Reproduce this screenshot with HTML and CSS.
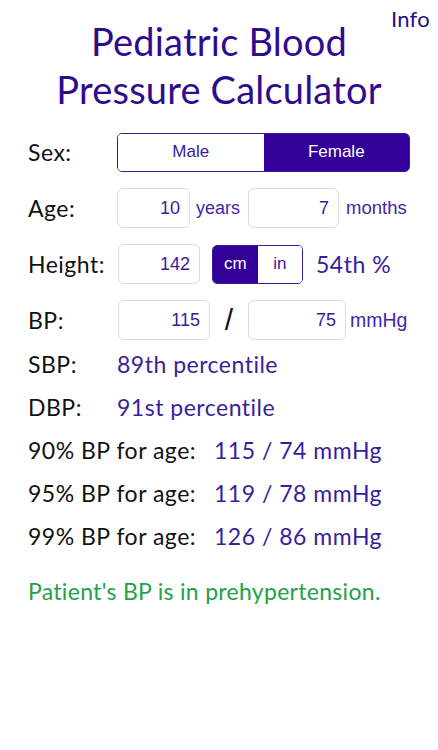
FILE: index.html
```html
<!DOCTYPE html>
<html>
<head>
<meta charset="utf-8">
<link rel="stylesheet" href="styles.css">
</head>
<body>
<div class="screen">
  <a class="info">Info</a>
  <h1 class="title">Pediatric Blood<br>Pressure Calculator</h1>

  <div class="row">
    <div class="label">Sex:</div>
    <div class="seg seg-sex">
      <div class="seg-item">Male</div>
      <div class="seg-item on">Female</div>
    </div>
  </div>

  <div class="row">
    <div class="label">Age:</div>
    <div class="box box-years">10</div>
    <div class="unit unit-years">years</div>
    <div class="box box-months">7</div>
    <div class="unit unit-months">months</div>
  </div>

  <div class="row">
    <div class="label">Height:</div>
    <div class="box box-height">142</div>
    <div class="seg seg-unit">
      <div class="seg-item on">cm</div>
      <div class="seg-item">in</div>
    </div>
    <div class="pct">54th %</div>
  </div>

  <div class="row">
    <div class="label">BP:</div>
    <div class="box box-sbp">115</div>
    <div class="slash">/</div>
    <div class="box box-dbp">75</div>
    <div class="unit unit-mmhg">mmHg</div>
  </div>

  <div class="results">
    <div class="res"><span class="res-label">SBP:</span><span class="val">89th percentile</span></div>
    <div class="res"><span class="res-label">DBP:</span><span class="val">91st percentile</span></div>
    <div class="res"><span class="res-label wide">90% BP for age:</span><span class="val">115 / 74 mmHg</span></div>
    <div class="res"><span class="res-label wide">95% BP for age:</span><span class="val">119 / 78 mmHg</span></div>
    <div class="res"><span class="res-label wide">99% BP for age:</span><span class="val">126 / 86 mmHg</span></div>
  </div>

  <div class="status">Patient's BP is in prehypertension.</div>
</div>
</body>
</html>
```

FILE: styles.css
```css
html, body {
  margin: 0;
  padding: 0;
  background: #ffffff;
}

.screen {
  position: relative;
  width: 438px;
  height: 750px;
  padding-top: 17px;
  box-sizing: border-box;
  font-family: "Lato", "Noto Sans", sans-serif;
  font-variant-ligatures: none;
  color: #111111;
}

.info {
  position: absolute;
  top: 4px;
  right: 8px;
  font-size: 22px;
  line-height: 30px;
  letter-spacing: 0.3px;
  color: #2c0c86;
}

.title {
  margin: 0 0 19px;
  font-size: 38px;
  line-height: 48px;
  font-weight: 400;
  letter-spacing: 0.2px;
  text-align: center;
  color: #2f0c8f;
}

.row {
  display: flex;
  align-items: center;
  height: 40px;
  margin-bottom: 16px;
  padding-left: 28px;
}

.label {
  width: 89px;
  font-size: 23px;
  letter-spacing: 0.5px;
}

.seg {
  display: flex;
  height: 39px;
  box-sizing: border-box;
  border: 1px solid #3a1a9c;
  border-radius: 5px;
  overflow: hidden;
  font-family: "Liberation Sans", Arial, sans-serif;
  font-size: 17px;
}

.seg-item {
  flex: 1;
  display: flex;
  align-items: center;
  justify-content: center;
  color: #3a1a9c;
  background: #ffffff;
}

.seg-item.on {
  background: #330099;
  color: #ffffff;
}

.seg-sex {
  width: 293px;
}

.seg-unit {
  width: 91px;
  margin-left: 12px;
}

.box {
  height: 40px;
  box-sizing: border-box;
  border: 1px solid #dddddd;
  border-radius: 6px;
  display: flex;
  align-items: center;
  justify-content: flex-end;
  padding-right: 9px;
  font-family: "Liberation Sans", Arial, sans-serif;
  font-size: 18px;
  color: #3a1a9c;
}

.box-years { width: 73px; }
.box-months { width: 91px; margin-left: 8px; }
.box-height { width: 82px; margin-left: 1px; }
.box-sbp { width: 92px; margin-left: 1px; }
.box-dbp { width: 98px; }

.unit {
  font-family: "Liberation Sans", Arial, sans-serif;
  font-size: 18px;
  color: #4426a6;
}

.unit-years { margin-left: 6px; }
.unit-months { margin-left: 7px; font-size: 18.5px; }
.unit-mmhg { margin-left: 4px; font-size: 19.5px; }

.slash {
  width: 38px;
  text-align: center;
  font-family: "Liberation Sans", Arial, sans-serif;
  font-size: 30px;
  color: #111111;
}

.pct {
  margin-left: 13px;
  font-size: 23px;
  letter-spacing: 0.5px;
  color: #3a1d9a;
}

.results {
  margin-top: -14px;
}

.res {
  display: flex;
  height: 43px;
  align-items: center;
  padding-left: 28px;
  font-size: 23px;
  letter-spacing: 0.5px;
}

.res-label {
  width: 89px;
}

.res-label.wide {
  width: 186px;
}

.val {
  color: #3a1d9a;
}

.status {
  margin-top: 12px;
  height: 43px;
  display: flex;
  align-items: center;
  padding-left: 28px;
  font-size: 23px;
  letter-spacing: 0.3px;
  color: #23a048;
}
```
